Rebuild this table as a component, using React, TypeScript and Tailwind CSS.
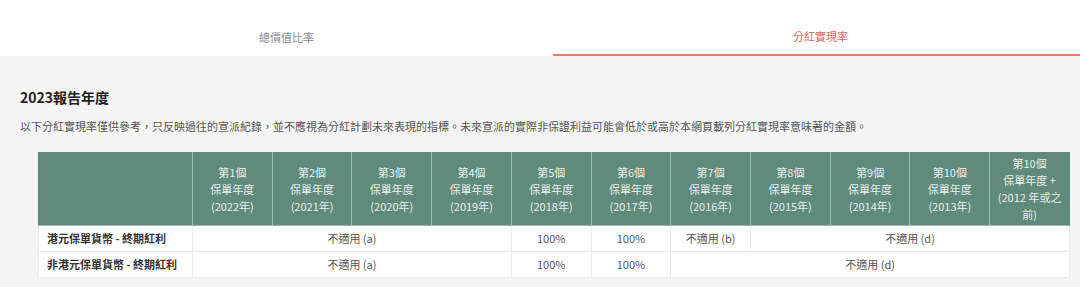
import React from 'react';

const font = { fontFamily: '"Noto Sans CJK TC", "Noto Sans", sans-serif' };

const years = [
  ['第1個', '保單年度', '(2022年)'],
  ['第2個', '保單年度', '(2021年)'],
  ['第3個', '保單年度', '(2020年)'],
  ['第4個', '保單年度', '(2019年)'],
  ['第5個', '保單年度', '(2018年)'],
  ['第6個', '保單年度', '(2017年)'],
  ['第7個', '保單年度', '(2016年)'],
  ['第8個', '保單年度', '(2015年)'],
  ['第9個', '保單年度', '(2014年)'],
  ['第10個', '保單年度', '(2013年)'],
  ['第10個', '保單年度 +', '(2012 年或之', '前)'],
];

const td = 'border border-[#ebebeb] text-center text-[11px] text-[#555] font-normal p-0';

export default function App() {
  return (
    <div className="w-full h-[287px] overflow-hidden bg-[#f4f4f4]" style={font}>
      {/* tabs */}
      <div className="flex h-[56px] bg-white">
        <div className="ml-[20px] w-[533px] flex items-center justify-center pt-[18px] text-[11px] text-[#8a8a8a]">
          總價值比率
        </div>
        <div className="flex-1 flex items-center justify-center pt-[18px] pl-[8px] border-b-2 border-[#e47b74] text-[11px] text-[#e0655d]">
          分紅實現率
        </div>
      </div>

      <div className="px-[20px]">
        <h2 className="mt-[31px] text-[14px] leading-[20px] font-bold text-[#222]">2023報告年度</h2>
        <p className="mt-[11px] text-[11px] leading-[16px] text-[#555]">
          以下分紅實現率僅供參考，只反映過往的宣派紀錄，並不應視為分紅計劃未來表現的指標。未來宣派的實際非保證利益可能會低於或高於本網頁載列分紅實現率意味著的金額。
        </p>

        <table className="mt-[18px] ml-[18px] w-[1032px] table-fixed border-collapse bg-white">
          <colgroup>
            <col className="w-[154px]" />
          </colgroup>
          <thead>
            <tr className="h-[73px] bg-[#608a7b]">
              <th className="border border-[#9fbab0] border-l-[#608a7b] border-t-[#608a7b]"></th>
              {years.map((lines, i) => (
                <th
                  key={i}
                  className="border border-[#9fbab0] border-t-[#608a7b] last:border-r-[#608a7b] text-center font-normal text-[11px] leading-[17px] text-[#e9f0ed] p-0"
                >
                  {lines.map((l, j) => (
                    <div key={j}>{l}</div>
                  ))}
                </th>
              ))}
            </tr>
          </thead>
          <tbody>
            <tr className="h-[26px]">
              <td className="border border-[#ebebeb] pl-[8px] text-[11px] font-bold text-[#333]">港元保單貨幣 - 終期紅利</td>
              <td colSpan={4} className={td}>不適用 (a)</td>
              <td className={td}>100%</td>
              <td className={td}>100%</td>
              <td className={td}>不適用 (b)</td>
              <td colSpan={4} className={td}>不適用 (d)</td>
            </tr>
            <tr className="h-[26px]">
              <td className="border border-[#ebebeb] pl-[8px] text-[11px] font-bold text-[#333]">非港元保單貨幣 - 終期紅利</td>
              <td colSpan={4} className={td}>不適用 (a)</td>
              <td className={td}>100%</td>
              <td className={td}>100%</td>
              <td colSpan={5} className={td}>不適用 (d)</td>
            </tr>
          </tbody>
        </table>
      </div>
    </div>
  );
}
